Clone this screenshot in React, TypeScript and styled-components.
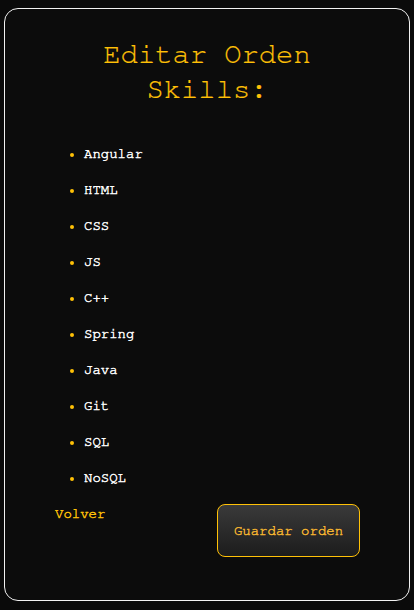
import React from "react";
import styled, { createGlobalStyle } from "styled-components";

const mono = `"Nimbus Mono PS", "Nimbus Mono L", "FreeMono", "Courier 10 Pitch", Courier, "Liberation Mono", monospace`;

const Global = createGlobalStyle`
  html, body { margin: 0; padding: 0; background: #0a0a0a; }
  body { font-family: ${mono}; }
`;

const Page = styled.div`
  padding: 8px 4px 9px 4px;
  box-sizing: border-box;
  height: 610px;
  display: flex;
`;

const Card = styled.div`
  flex: 1;
  border: 1px solid #f2f2f2;
  border-radius: 14px;
  background: #0c0c0c;
  padding: 28px 0 0 0;
  display: flex;
  flex-direction: column;
`;

const Title = styled.h1`
  margin: 0;
  text-align: center;
  font-family: ${mono};
  font-weight: normal;
  font-size: 28.8px;
  line-height: 35px;
  color: #ffc107;
  -webkit-text-stroke: 0.2px #ffc107;
`;

const List = styled.ul`
  margin: 39px 0 0 0;
  padding: 0 0 0 79px;
  list-style: disc;
`;

const Item = styled.li`
  color: #ffffff;
  font-size: 14px;
  line-height: 16px;
  margin-bottom: 20px;
  -webkit-text-stroke: 0.45px #ffffff;
  &::marker { color: #ffc107; -webkit-text-stroke: 0; }
`;

const Actions = styled.div`
  display: flex;
  align-items: flex-start;
  padding: 0 49px 0 50px;
  margin-top: -3px;
`;

const Back = styled.a`
  color: #ffc107;
  font-size: 14px;
  line-height: 16px;
  margin-top: 3px;
  -webkit-text-stroke: 0.45px #ffc107;
  text-decoration: none;
  cursor: pointer;
`;

const SaveButton = styled.button`
  margin-left: auto;
  margin-top: 1px;
  width: 143px;
  height: 53px;
  border: 1px solid #ffc107;
  border-radius: 8px;
  background: linear-gradient(#3a3a3a, #1c1c1c);
  color: #f5b530;
  font-family: ${mono};
  font-size: 14px;
  -webkit-text-stroke: 0.45px #f5b530;
  cursor: pointer;
`;

const skills = ["Angular", "HTML", "CSS", "JS", "C++", "Spring", "Java", "Git", "SQL", "NoSQL"];

export default function App() {
  return (
    <>
      <Global />
      <Page>
        <Card>
          <Title>
            Editar Orden
            <br />
            Skills:
          </Title>
          <List>
            {skills.map((s) => (
              <Item key={s}>{s}</Item>
            ))}
          </List>
          <Actions>
            <Back>Volver</Back>
            <SaveButton>Guardar orden</SaveButton>
          </Actions>
        </Card>
      </Page>
    </>
  );
}
